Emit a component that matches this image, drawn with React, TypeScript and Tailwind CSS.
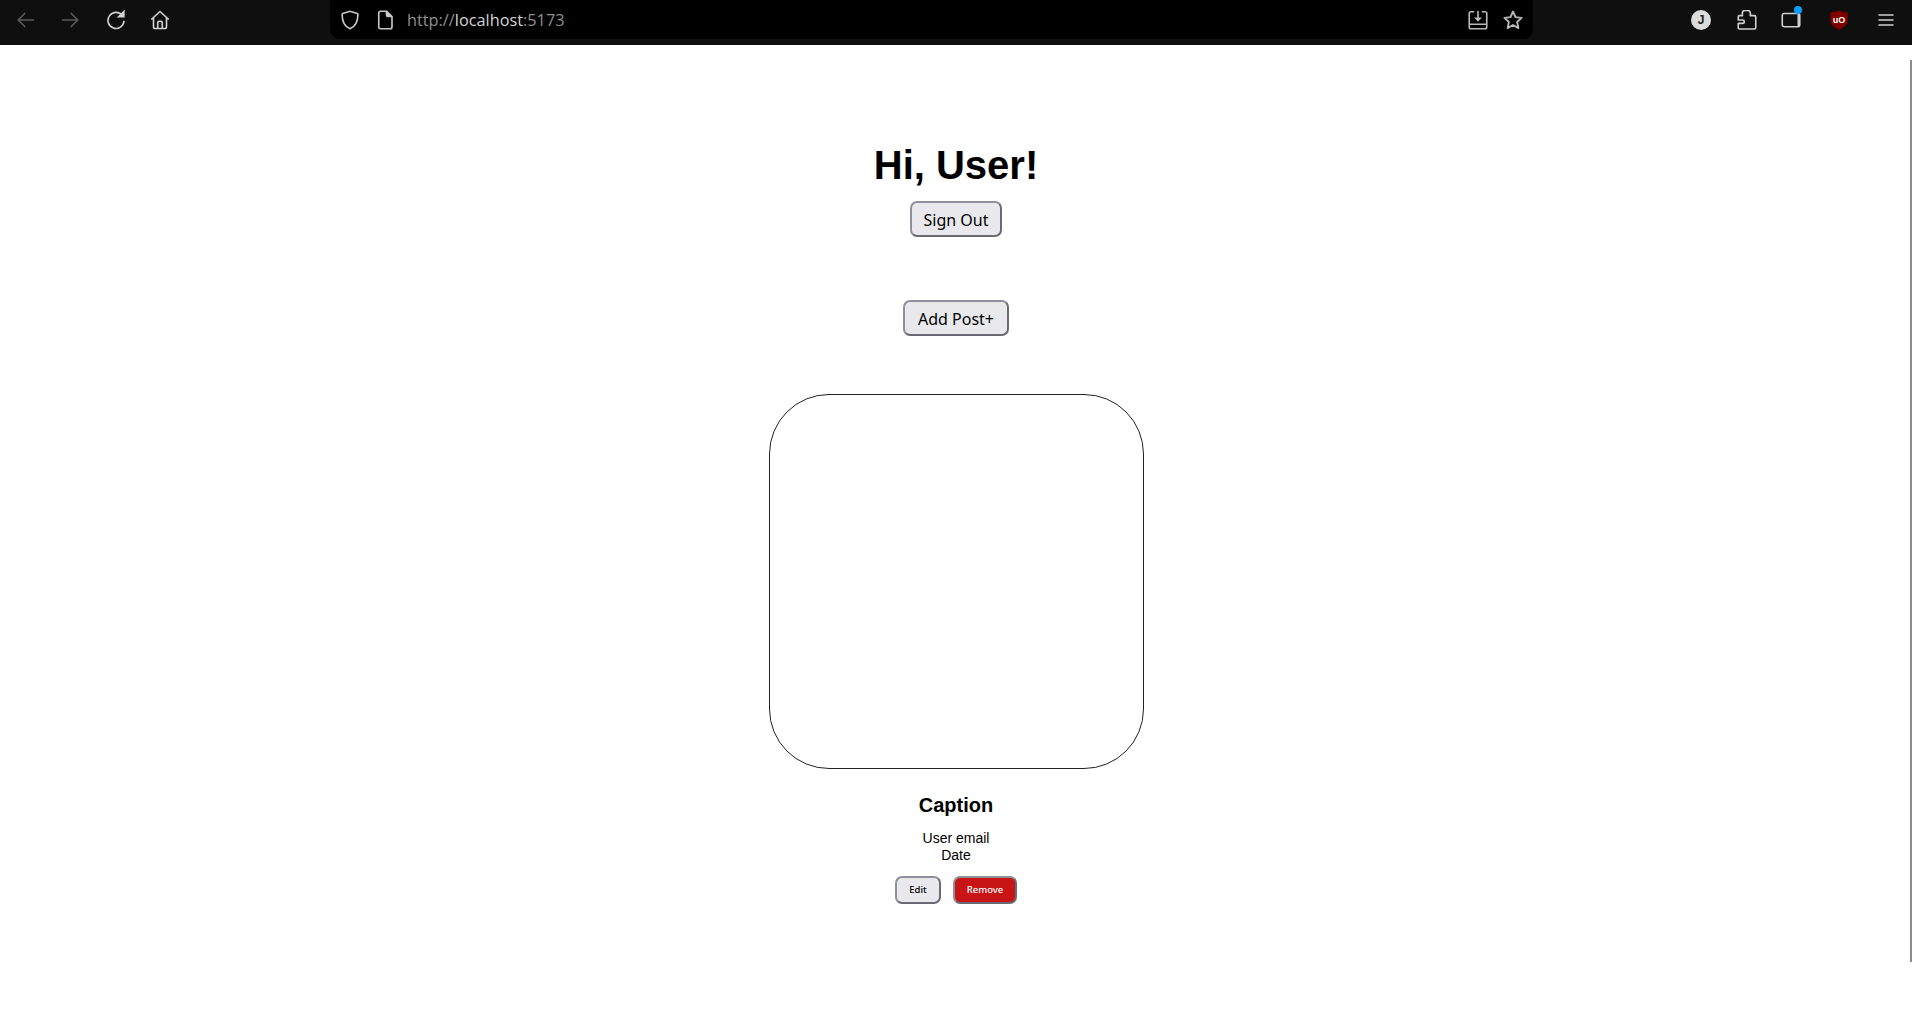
import React from 'react';

const outline = 'fill-none stroke-current stroke-[1.3]';

function BackIcon() {
  return (
    <svg viewBox="0 0 16 16" className={`h-5 w-5 text-[#5a5a5a] ${outline}`}>
      <path d="M14.5 8H1.8M7.4 2.4 1.8 8l5.6 5.6" />
    </svg>
  );
}

function ForwardIcon() {
  return (
    <svg viewBox="0 0 16 16" className={`h-5 w-5 text-[#5a5a5a] ${outline}`}>
      <path d="M1.5 8h12.7M8.6 2.4 14.2 8l-5.6 5.6" />
    </svg>
  );
}

function ReloadIcon() {
  return (
    <svg viewBox="0 0 16 16" className={`h-5 w-5 text-[#d0d0d0] ${outline}`}>
      <path d="M13.2 4.6A6.4 6.4 0 1 0 14.4 8.6" />
      <path d="M14.3 1.2v4.2h-4.2z" className="fill-current" />
    </svg>
  );
}

function HomeIcon() {
  return (
    <svg viewBox="0 0 16 16" className={`h-5 w-5 text-[#d0d0d0] ${outline}`}>
      <path d="M1 7.6 8 1.2l7 6.4M2.8 6.2v7.2c0 .8.6 1.4 1.4 1.4h7.6c.8 0 1.4-.6 1.4-1.4V6.2" />
      <path d="M6.2 14.8V10c0-.6.4-1 1-1h1.6c.6 0 1 .4 1 1v4.8" />
    </svg>
  );
}

function ShieldIcon() {
  return (
    <svg viewBox="0 0 16 16" className={`h-5 w-5 text-[#c8c8c8] ${outline}`}>
      <path d="M8 1 2.2 2.8c-.3.1-.5.4-.5.7 0 6.4 2.4 9.8 6.3 11.5 3.9-1.7 6.3-5.1 6.3-11.5 0-.3-.2-.6-.5-.7z" />
    </svg>
  );
}

function PageIcon() {
  return (
    <svg viewBox="0 0 16 16" className={`h-5 w-5 text-[#c8c8c8] ${outline}`}>
      <path d="M3 2.4C3 1.6 3.6 1 4.4 1h5L13.6 5.2v8.4c0 .8-.6 1.4-1.4 1.4H4.4C3.6 15 3 14.4 3 13.6z" />
      <path d="M9.2 1v3.2c0 .6.4 1 1 1h3.4" className="fill-current" />
    </svg>
  );
}

function SavePageIcon() {
  return (
    <svg viewBox="0 0 16 16" className={`h-5 w-5 text-[#b8b8b8] ${outline}`}>
      <path d="M5 1.4H2.4c-.8 0-1.4.6-1.4 1.4v10.8c0 .8.6 1.4 1.4 1.4h11.2c.8 0 1.4-.6 1.4-1.4V2.8c0-.8-.6-1.4-1.4-1.4H11" />
      <path d="M1 11.4h14M8 .8v7" />
      <path d="M4.8 6h6.4L8 9.4z" className="fill-current stroke-none" />
    </svg>
  );
}

function StarIcon() {
  return (
    <svg viewBox="0 0 16 16" className="h-5 w-5 fill-none stroke-current stroke-[1.5] text-[#b8b8b8]">
      <path d="m8 1.2 2 4.5 4.9.6-3.6 3.3 1 4.9L8 12l-4.3 2.5 1-4.9L1.100 6.300l4.900-.6z" strokeLinejoin="round" />
    </svg>
  );
}

function PuzzleIcon() {
  return (
    <svg viewBox="0 0 16 16" className={`h-5 w-5 text-[#d0d0d0] ${outline}`}>
      <path
        d="M2 15.2h11.800c.7 0 1.200-.5 1.200-1.200V5.600c0-.6-.5-1.100-1.100-1.100h-3.200V2.600a2.300 2.300 0 0 0-2.300-2.300H6.400a2.100 2.100 0 0 0-2.100 2.100v2.100H2c-.6 0-1 .4-1 1V8h3.600c.7 0 1.200.5 1.200 1.200v.4c0 .6-.5 1.100-1.200 1.100H1v3.500c0 .6.4 1 1 1z"
        strokeLinejoin="round"
      />
    </svg>
  );
}

function SidebarIcon() {
  return (
    <div className="relative">
      <svg viewBox="0 0 16 16" className={`h-5 w-5 text-[#d0d0d0] ${outline}`}>
        <rect x="1" y="2.800" width="14" height="10.600" rx="1.600" />
        <path d="M13.200 2.800h.6c.7 0 1.200.5 1.200 1.200v8.200c0 .7-.5 1.200-1.200 1.200h-.6z" className="fill-current stroke-none" />
      </svg>
      <span className="absolute -right-[1px] -top-[4px] h-[8px] w-[8px] rounded-full bg-[#0a9fff]" />
    </div>
  );
}

function UblockIcon() {
  return (
    <svg viewBox="0 0 18 20" className="h-5 w-[18px]">
      <path d="M9 .2 6 1.800.3 2.600v7c0 4.800 3.400 7.800 8.700 10.200 5.300-2.400 8.700-5.400 8.700-10.200v-7L12 1.800z" fill="#800000" />
      <text x="9" y="12.600" textAnchor="middle" fontSize="9" fontWeight="700" fill="#fff" fontFamily="Liberation Sans, sans-serif">
        uO
      </text>
    </svg>
  );
}

function MenuIcon() {
  return (
    <svg viewBox="0 0 16 16" className={`h-5 w-5 text-[#d0d0d0] ${outline}`}>
      <path d="M2 4h12M2 8h12M2 12h12" />
    </svg>
  );
}

function Toolbar() {
  return (
    <div className="flex h-[45px] items-start bg-[#0f0f0f]">
      <div className="flex h-[39px] items-center pl-[4px]">
        <div className="flex w-[44px] justify-center"><BackIcon /></div>
        <div className="flex w-[44px] justify-center"><ForwardIcon /></div>
        <div className="ml-[2px] flex w-[44px] justify-center"><ReloadIcon /></div>
        <div className="flex w-[44px] justify-center"><HomeIcon /></div>
      </div>
      <div className="ml-[148px] flex h-[39px] w-[1203px] items-center rounded-b-[10px] bg-black">
        <div className="ml-[10px] flex w-[20px] justify-center"><ShieldIcon /></div>
        <div className="ml-[15px] flex w-[20px] justify-center"><PageIcon /></div>
        <div className="ml-[12px] pt-[2px] font-['Open_Sans',sans-serif] text-[16.3px] text-[#8f8f8f]">
          http://<span className="text-[#d4d4d4]">localhost</span>:5173
        </div>
        <div className="ml-auto flex items-center gap-[15px] pr-[10px]">
          <SavePageIcon />
          <StarIcon />
        </div>
      </div>
      <div className="ml-[158px] flex h-[39px] items-center">
        <div className="flex w-[20px] justify-center">
          <span className="flex h-5 w-5 items-center justify-center rounded-full bg-[#dcdcdc] font-['Liberation_Sans',sans-serif] text-[12px] font-bold text-[#222]">
            J
          </span>
        </div>
        <div className="ml-[26px] flex w-[20px] justify-center"><PuzzleIcon /></div>
        <div className="ml-[24px] flex w-[20px] justify-center"><SidebarIcon /></div>
        <div className="ml-[28px] flex w-[20px] justify-center"><UblockIcon /></div>
        <div className="ml-[27px] flex w-[20px] justify-center"><MenuIcon /></div>
      </div>
    </div>
  );
}

const buttonBorder =
  'rounded-[7px] border-2 pt-px border-t-[#8f8f9d] border-l-[#8f8f9d] border-r-[#6a6a75] border-b-[#6a6a75]';

export default function App() {
  return (
    <div className="relative h-screen overflow-hidden bg-white font-['Liberation_Sans',Arial,sans-serif] text-black">
      <Toolbar />
      <div className="flex flex-col items-center pt-[97px]">
        <h1 className="text-[40px] font-bold leading-[46px]">Hi, User!</h1>
        <button className={`mt-[13px] h-[36px] w-[92px] bg-[#e9e9ed] font-['Noto_Sans',sans-serif] text-[16px] ${buttonBorder}`}>
          Sign Out
        </button>
        <button className={`mt-[63px] h-[36px] w-[106px] bg-[#e9e9ed] font-['Noto_Sans',sans-serif] text-[16px] ${buttonBorder}`}>
          Add Post+
        </button>
        <div className="mt-[58px] h-[375px] w-[375px] rounded-[60px] border border-[#222]" />
        <h2 className="mt-[25px] text-[20px] font-bold leading-[23px]">Caption</h2>
        <div className="mt-[13px] text-center text-[14px] leading-[17px]">
          <div>User email</div>
          <div>Date</div>
        </div>
        <div className="mt-[12px] flex gap-[12px]">
          <button className={`h-[28px] w-[46px] bg-[#e9e9ed] font-['Noto_Sans',sans-serif] text-[9.5px] font-medium ${buttonBorder}`}>
            Edit
          </button>
          <button className={`h-[28px] w-[64px] bg-[#c81414] font-['Noto_Sans',sans-serif] text-[9.5px] font-medium text-white ${buttonBorder}`}>
            Remove
          </button>
        </div>
      </div>
      <div className="absolute left-[1910px] top-[60px] h-[902px] w-[2px] bg-[#8c8c8c]" />
    </div>
  );
}
